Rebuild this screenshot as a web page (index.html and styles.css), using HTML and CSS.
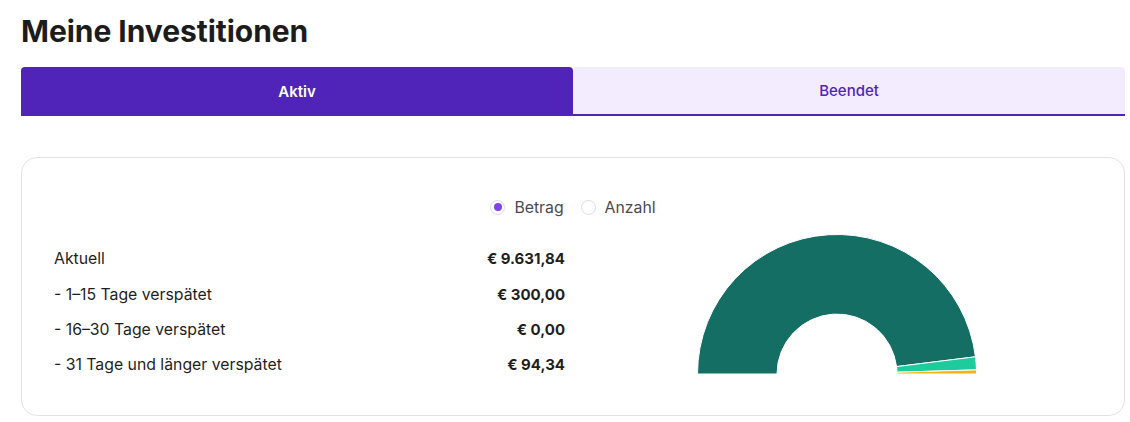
FILE: index.html
```html
<!DOCTYPE html>
<html lang="de">
<head>
<meta charset="utf-8">
<title>Meine Investitionen</title>
<link rel="stylesheet" href="styles.css">
</head>
<body>
<main class="page">
  <h1 class="title">Meine Investitionen</h1>
  <nav class="tabs">
    <button class="tab tab-active">Aktiv</button>
    <button class="tab">Beendet</button>
  </nav>
  <section class="card">
    <div class="radios">
      <label class="radio"><span class="dot dot-on"></span>Betrag</label>
      <label class="radio"><span class="dot"></span>Anzahl</label>
    </div>
    <div class="content">
      <ul class="list">
        <li class="row"><span>Aktuell</span><strong>€ 9.631,84</strong></li>
        <li class="row"><span>- 1–15 Tage verspätet</span><strong>€ 300,00</strong></li>
        <li class="row"><span>- 16–30 Tage verspätet</span><strong>€ 0,00</strong></li>
        <li class="row"><span>- 31 Tage und länger verspätet</span><strong>€ 94,34</strong></li>
      </ul>
      <div class="chart">
        <svg width="281" height="141" viewBox="0 0 281 141">
          <g stroke="#ffffff" stroke-width="1" stroke-linejoin="round">
            <path fill="#146e63" d="M 0.5 140 A 139.5 139.5 0 0 1 278.44 122.81 L 199.54 132.60 A 60 60 0 0 0 80 140 Z"/>
            <path fill="#1dcb9c" d="M 278.44 122.81 A 139.5 139.5 0 0 1 279.44 135.89 L 199.97 138.23 A 60 60 0 0 0 199.54 132.60 Z"/>
            <path fill="#f5b50f" d="M 279.44 135.89 A 139.5 139.5 0 0 1 279.5 140 L 200 140 A 60 60 0 0 0 199.97 138.23 Z"/>
          </g>
        </svg>
      </div>
    </div>
  </section>
</main>
</body>
</html>
```
FILE: styles.css
```css
* { box-sizing: border-box; }
html, body { margin: 0; padding: 0; background: #ffffff; }
body {
  font-family: Inter, "Noto Sans", "Liberation Sans", sans-serif;
  color: #1f1f1f;
}
.page {
  padding: 0 5px 0 21px;
}
.title {
  margin: 0;
  padding-top: 11px;
  font-size: 30px;
  line-height: 40px;
  font-weight: 700;
  letter-spacing: -0.05px;
  color: #1c1c1c;
}
.tabs {
  display: grid;
  grid-template-columns: 1fr 1fr;
  margin-top: 16px;
}
.tab {
  height: 49px;
  border: 0;
  font-family: inherit;
  font-size: 15px;
  font-weight: 500;
  background: #f3ecfe;
  color: #5024b8;
  border-bottom: 2px solid #5024b8;
  border-radius: 4px 4px 0 0;
  padding: 0;
}
.tab-active {
  background: #5024b8;
  color: #ffffff;
  font-weight: 600;
  border-bottom: 0;
}
.card {
  margin-top: 41px;
  border: 1px solid #e3e3e6;
  border-radius: 16px;
  padding: 39px 32px 32px;
}
.radios {
  display: flex;
  justify-content: center;
  gap: 17px;
  height: 20px;
  align-items: center;
}
.radio {
  display: flex;
  align-items: center;
  gap: 9px;
  font-size: 15.8px;
  color: #4a4a55;
}
.dot {
  width: 15px;
  height: 15px;
  border-radius: 50%;
  border: 1.5px solid #dcdde3;
  display: flex;
  align-items: center;
  justify-content: center;
}
.dot-on::after {
  content: "";
  width: 8px;
  height: 8px;
  border-radius: 50%;
  background: #8043ec;
}
.content {
  display: grid;
  grid-template-columns: 1fr 1fr;
  column-gap: 16px;
  margin-top: 16px;
  align-items: start;
}
.list {
  list-style: none;
  margin: 0;
  padding: 8px 0 0;
}
.row {
  display: flex;
  justify-content: space-between;
  align-items: center;
  height: 35.4px;
  font-size: 15.8px;
  color: #1f1f1f;
}
.row strong { font-weight: 700; font-size: 15px; }
.chart {
  display: flex;
  justify-content: center;
  padding-left: 1px;
  padding-top: 1px;
}
.chart svg { display: block; }
```
